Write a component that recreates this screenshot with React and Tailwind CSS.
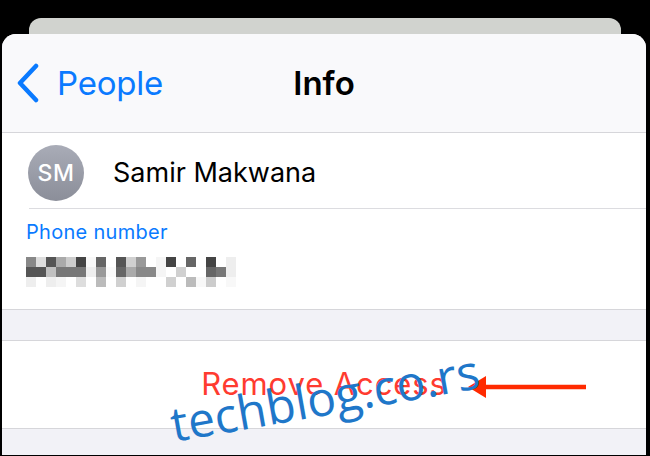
import React from 'react'

const blur = [
  ['#888', '#ddd', '#555', '#aaa', '#ccc', '#444', '#f8f8f8', '#666', '#fff', '#555', '#d0d0d0', '#999', '#fff', '#f5f5f5', '#444', '#fff', '#666', '#fff', '#444', '#fff', '#eee'],
  ['#555', '#555', '#c0c0c0', '#777', '#777', '#777', '#eee', '#999', '#fafafa', '#666', '#aaa', '#888', '#888', '#f5f5f5', '#fff', '#d0d0d0', '#fff', '#fff', '#666', '#777', '#eee'],
  ['#eee', '#fff', '#eee', '#f5f5f5', '#fff', '#ddd', '#fff', '#bbb', '#fff', '#d0d0d0', '#fff', '#f5f5f5', '#fff', '#fff', '#d0d0d0', '#fff', '#bbb', '#f8f8f8', '#ccc', '#fff', '#f8f8f8'],
]

export default function App() {
  return (
    <div className="relative w-[650px] h-[456px] overflow-hidden bg-black font-['Inter',sans-serif]">
      <div className="pt-[18px]">
        <div className="ml-[29px] w-[592px] h-[16px] rounded-t-[12px] bg-[#d1d3cf]" />
        <div className="ml-[2px] w-[644px] h-[421px] rounded-t-[14px] overflow-hidden bg-[#f2f2f7]">
          {/* nav bar */}
          <div className="relative h-[99px] flex items-center bg-[#f9f9fb] border-b border-[#d6d6da]">
            <div className="flex items-center pl-[14px] text-[#0a7aff]">
              <svg width="24" height="40" viewBox="0 0 24 40" fill="none">
                <path d="M20 3 L4 20 L20 37" stroke="#0a7aff" strokeWidth="4.5" strokeLinecap="round" strokeLinejoin="round" />
              </svg>
              <span className="ml-[17px] text-[33px] leading-none tracking-[-0.2px]">People</span>
            </div>
            <div className="absolute inset-0 flex items-center justify-center">
              <span className="text-[33px] font-semibold leading-none text-black">Info</span>
            </div>
          </div>

          {/* contact */}
          <div className="bg-white border-b border-[#d6d6da]">
            <div className="flex items-center h-[75px] pl-[26px] pt-[5px]">
              <div className="w-[56px] h-[56px] rounded-full bg-gradient-to-b from-[#a9acb7] to-[#8b8e99] flex items-center justify-center">
                <span className="text-white text-[23px] font-medium tracking-[0.5px]">SM</span>
              </div>
              <span className="ml-[29px] text-[27px] text-black">Samir Makwana</span>
            </div>
            <div className="ml-[27px] h-px bg-[#dcdce0]" />
            <div className="h-[100px] pl-[24px] pt-[11px]">
              <div className="text-[20px] leading-[24px] text-[#0a7aff] tracking-[0.3px]">Phone number</div>
              <div className="mt-[13px] flex flex-col">
                {blur.map((row, i) => (
                  <div key={i} className="flex">
                    {row.map((c, j) => (
                      <div key={j} className="w-[10px] h-[10px]" style={{ backgroundColor: c }} />
                    ))}
                  </div>
                ))}
              </div>
            </div>
          </div>

          <div className="h-[31px] border-b border-[#d6d6da]" />

          <div className="h-[88px] bg-white border-b border-[#d6d6da] flex items-center justify-center">
            <span className="text-[31px] text-[#ff3b30] tracking-[0.9px]">Remove Access</span>
          </div>
        </div>
      </div>

      {/* annotation arrow */}
      <svg className="absolute left-[466px] top-[374px]" width="124" height="26" viewBox="0 0 124 26">
        <line x1="16" y1="13" x2="120" y2="13" stroke="#ff2a00" strokeWidth="4.5" />
        <polygon points="2,13 20,2 20,24" fill="#ff2a00" />
      </svg>

      {/* watermark */}
      <div className="absolute left-[175px] top-[400px] origin-bottom-left -rotate-[10deg] font-['Open_Sans',sans-serif] text-[48px] leading-none text-[#1f77c9] whitespace-nowrap">
        techblog.co.rs
      </div>
    </div>
  )
}
